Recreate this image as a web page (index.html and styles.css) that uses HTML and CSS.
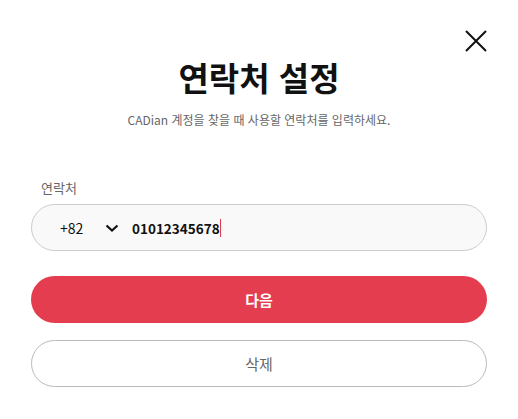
FILE: index.html
```html
<!DOCTYPE html>
<html lang="ko">
<head>
<meta charset="utf-8">
<link rel="stylesheet" href="styles.css">
</head>
<body>
<div class="dialog">
  <div class="top">
    <button class="close" aria-label="닫기">
      <svg width="22" height="22" viewBox="0 0 22 22"><path d="M1 1L21 21M21 1L1 21" stroke="#111" stroke-width="2" fill="none"/></svg>
    </button>
  </div>
  <h1 class="title">연락처 설정</h1>
  <p class="sub">CADian 계정을 찾을 때 사용할 연락처를 입력하세요.</p>
  <div class="label">연락처</div>
  <div class="field">
    <span class="code">+82</span>
    <svg class="chev" width="14" height="8" viewBox="0 0 14 8"><path d="M1.5 1.5L7 6.5L12.5 1.5" stroke="#111" stroke-width="2.2" fill="none"/></svg>
    <span class="num">01012345678</span><span class="caret"></span>
  </div>
  <button class="btn primary">다음</button>
  <button class="btn outline">삭제</button>
</div>
</body>
</html>
```
FILE: styles.css
```css
* { box-sizing: border-box; }
html, body { margin: 0; padding: 0; background: #fff; }
body { font-family: "Noto Sans CJK KR", "Noto Sans", sans-serif; width: 518px; height: 419px; overflow: hidden; }
.dialog { padding: 0 31px; display: flex; flex-direction: column; }
.top { display: flex; justify-content: flex-end; padding-top: 30px; height: 52px; }
.close { border: 0; background: none; padding: 0; width: 22px; height: 22px; cursor: pointer; }
.close svg { display: block; }
.title { margin: 5px 0 0; text-align: center; font-size: 33px; font-weight: 700; line-height: 40px; color: #111; }
.sub { margin: 15px 0 0; text-align: center; font-size: 12px; line-height: 16px; color: #666; }
.label { margin-top: 51px; font-size: 13px; line-height: 18px; color: #666; padding-left: 10px; }
.field { margin-top: 7px; height: 47px; border: 1px solid #ccc; border-radius: 24px; background: #f9f9f9; display: flex; align-items: center; padding-left: 28px; }
.code { font-size: 14px; color: #111; width: 45px; }
.chev { display: block; margin-right: 13px; }
.num { font-size: 13.5px; font-weight: 700; color: #111; }
.caret { display: inline-block; width: 1px; height: 18px; background: #e33b4c; }
.btn { font-family: inherit; display: block; width: 100%; height: 47px; border-radius: 24px; font-size: 15px; cursor: pointer; }
.primary { margin-top: 25px; background: #e33d4f; border: 0; color: #fff; font-weight: 700; }
.outline { margin-top: 17px; background: #fff; border: 1px solid #bbb; color: #666; }
```
